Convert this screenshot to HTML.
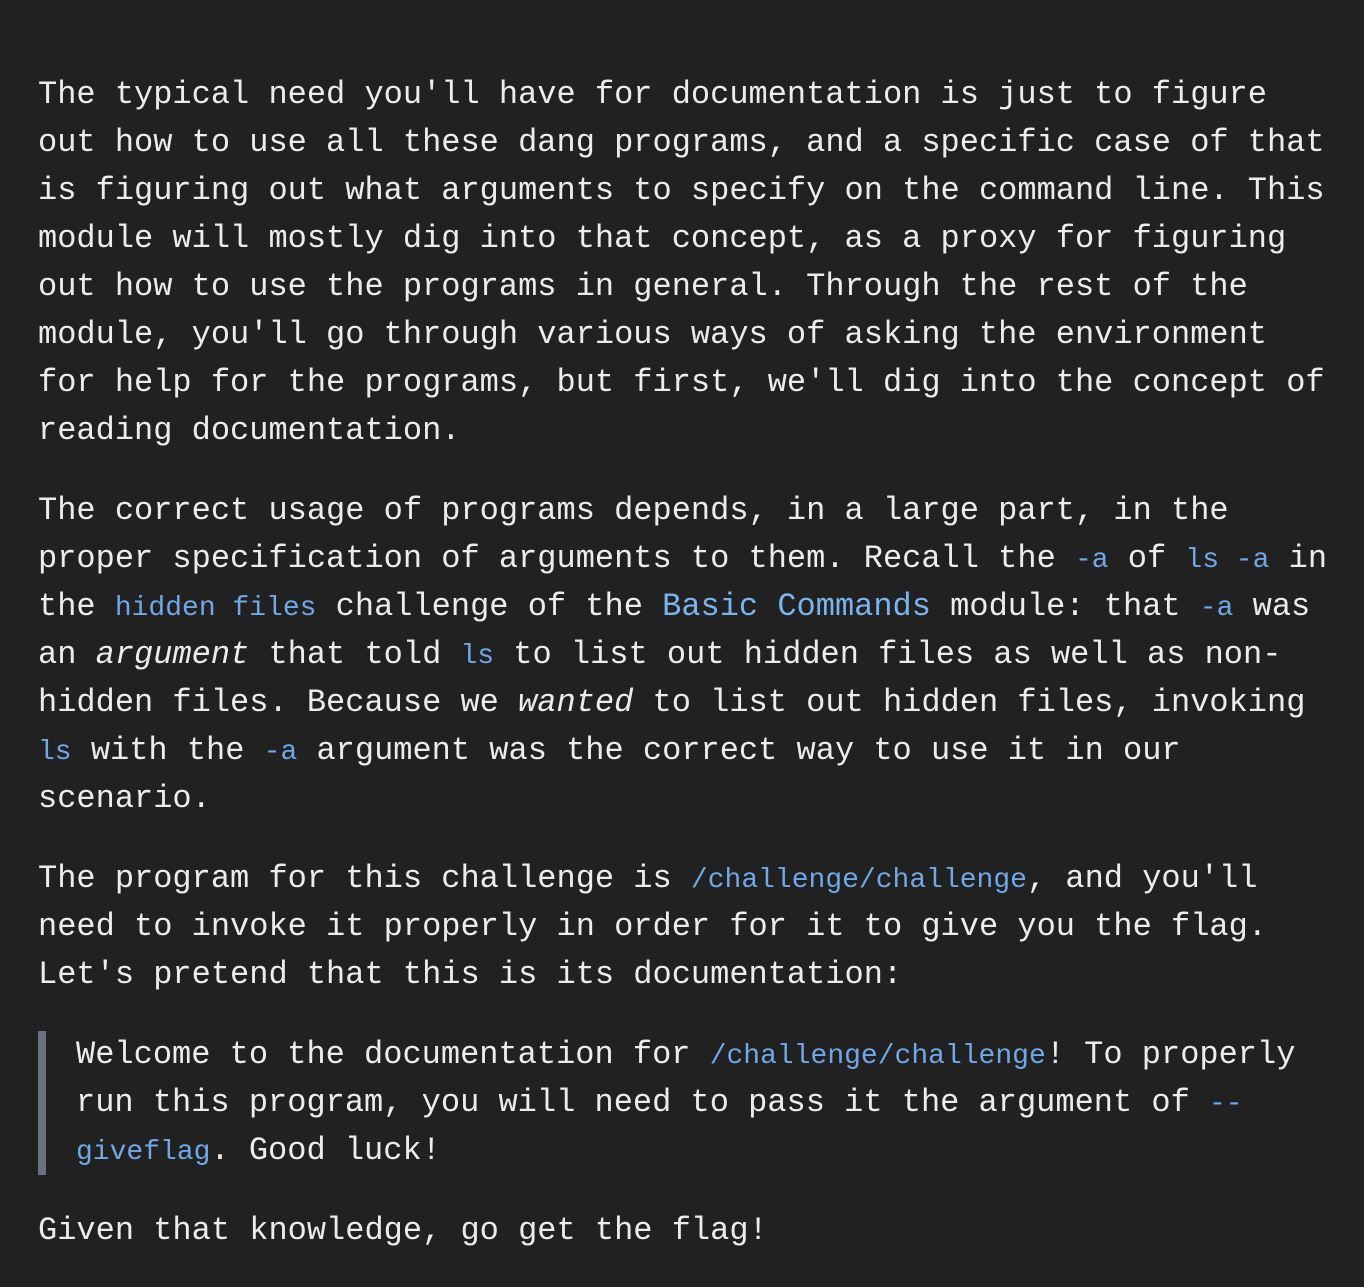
<!DOCTYPE html>
<html><head><meta charset="utf-8"><style>
html,body{margin:0;background:#212121;}
body{width:1364px;height:1276px;overflow:hidden;font-family:"Liberation Mono",monospace;font-size:32px;line-height:48px;color:#ececec;}
.w{position:absolute;left:38px;top:71px;white-space:nowrap;}
p{margin:0 0 32px 0;}
code{font-family:"Liberation Mono",monospace;font-size:28px;line-height:0;color:#6fa8e6;}
a{color:#7ab4ee;text-decoration:none;}
blockquote{margin:0 0 32px 0;border-left:8px solid #6a737d;padding-left:30px;}
</style></head><body><div class="w">
<p>The typical need you'll have for documentation is just to figure<br>out how to use all these dang programs, and a specific case of that<br>is figuring out what arguments to specify on the command line. This<br>module will mostly dig into that concept, as a proxy for figuring<br>out how to use the programs in general. Through the rest of the<br>module, you'll go through various ways of asking the environment<br>for help for the programs, but first, we'll dig into the concept of<br>reading documentation.</p>
<p>The correct usage of programs depends, in a large part, in the<br>proper specification of arguments to them. Recall the <code>-a</code> of <code>ls -a</code> in<br>the <code>hidden files</code> challenge of the <a>Basic Commands</a> module: that <code>-a</code> was<br>an <i>argument</i> that told <code>ls</code> to list out hidden files as well as non-<br>hidden files. Because we <i>wanted</i> to list out hidden files, invoking<br><code>ls</code> with the <code>-a</code> argument was the correct way to use it in our<br>scenario.</p>
<p>The program for this challenge is <code>/challenge/challenge</code>, and you'll<br>need to invoke it properly in order for it to give you the flag.<br>Let's pretend that this is its documentation:</p>
<blockquote>Welcome to the documentation for <code>/challenge/challenge</code>! To properly<br>run this program, you will need to pass it the argument of <code>--</code><br><code>giveflag</code>. Good luck!</blockquote>
<p>Given that knowledge, go get the flag!</p>
</div></body></html>
